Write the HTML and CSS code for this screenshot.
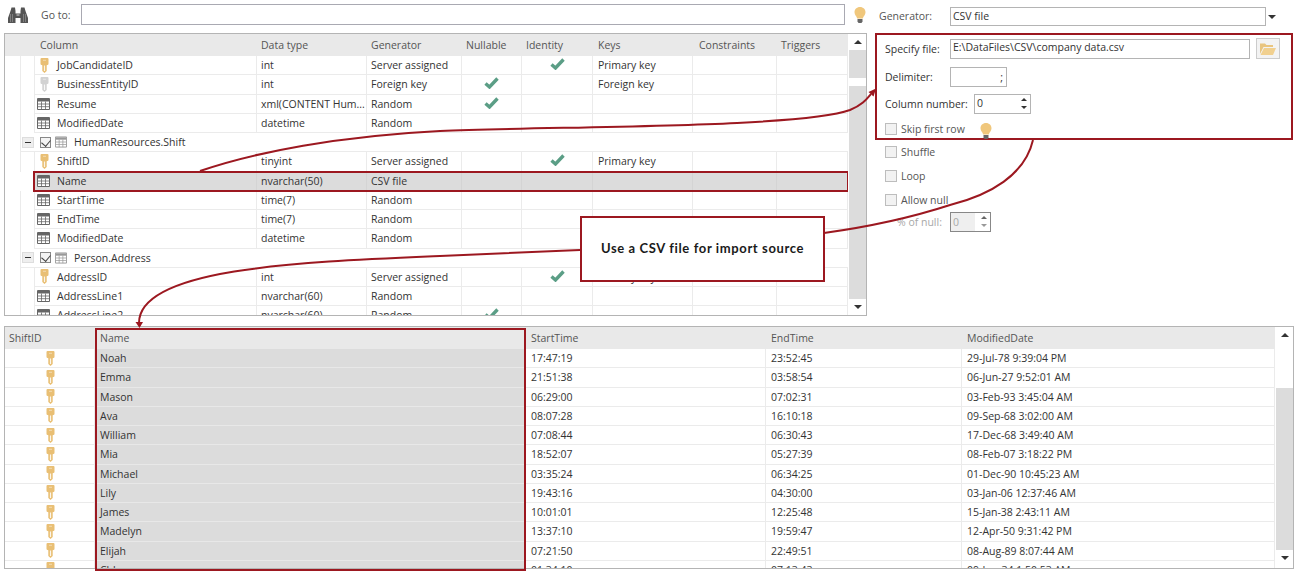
FILE: index.html
```html
<!DOCTYPE html>
<html lang="en">
<head>
    <meta charset="UTF-8">
    <title>Data Generator - CSV file</title>
    <link rel="stylesheet" href="styles.css">
</head>
<body>
    <svg class="defs" width="0" height="0">
        <symbol id="key" viewBox="0 0 9 15">
            <path d="M1.600 0h5.800q1.100 0 1.100 1.100v4.600q0 1.200-1.200 1.400l-.6.200v5.700L4.500 15l-2.200-2V7.300l-.6-.2Q.5 6.900.5 5.700V1.100Q.5 0 1.600 0z" fill="currentColor"/>
            <path d="M4.500 7.500v5.500" stroke="#fff" stroke-width="1.200" opacity=".85"/>
            <rect x="3" y="1.700" width="3" height="1.300" fill="#fff" opacity=".35"/>
        </symbol>
        <symbol id="tableicon" viewBox="0 0 13 12">
            <path d="M.5.5h12v11H.5z" fill="#fff" stroke="currentColor"/>
            <path d="M1 1h11v2.500H1z" fill="currentColor"/>
            <path d="M1 6h11M1 8.700h11M4.500 3.500v8M8.500 3.500v8" stroke="currentColor" stroke-width=".8" fill="none"/>
        </symbol>
        <symbol id="check" viewBox="0 0 15 12">
            <path d="M1.500 6.500l4 3.500L13.500 1.500" fill="none" stroke="#5b9e86" stroke-width="3.400"/>
        </symbol>
        <symbol id="bulb" viewBox="0 0 12 16">
            <path d="M6 0C2.700 0 .5 2.300.5 5.200c0 2.500 2 3.800 2.700 6.200h5.600c.7-2.400 2.700-3.700 2.700-6.200C11.500 2.300 9.300 0 6 0z" fill="#f0c77c"/>
            <path d="M3.500 12h5v2.500l-1 1.500h-3l-1-1.500z" fill="#666"/>
        </symbol>
    </svg>

    <div class="upper">
        <div class="left">
            <div class="goto">
                <svg class="binoculars" viewBox="0 0 20 16" width="20" height="16">
                    <path d="M2.500 4L3.500.5h3.500L7.500 4v2.500h5V4l.5-3.500h3.500l1 3.500L20 11v5h-7.500v-5h-5v5H0v-5z" fill="#555"/>
                    <path d="M2.500 7v8M4.500 7v8M15.500 7v8M17.500 7v8" stroke="#8c8c8c" stroke-width=".8"/>
                    <path d="M8.500 8h3" stroke="#ddd" stroke-width="1"/>
                </svg>
                <span class="goto-label">Go to:</span>
                <div class="goto-input"></div>
                <svg class="bulb goto-bulb"><use href="#bulb"/></svg>
            </div>

            <div class="grid columns-grid">
                <div class="grid-body">
                    <div class="row head">
                        <div></div><div>Column</div><div>Data type</div><div>Generator</div><div>Nullable</div><div>Identity</div><div>Keys</div><div>Constraints</div><div>Triggers</div>
                    </div>
                    <div class="row">
                        <div class="gutter"></div>
                        <div class="name"><svg class="key"><use href="#key"/></svg>JobCandidateID</div><div>int</div><div>Server assigned</div><div></div><div class="mark"><svg class="check"><use href="#check"/></svg></div><div>Primary key</div><div></div><div></div>
                    </div>
                    <div class="row">
                        <div class="gutter"></div>
                        <div class="name"><svg class="key key-grey"><use href="#key"/></svg>BusinessEntityID</div><div>int</div><div>Foreign key</div><div class="mark"><svg class="check"><use href="#check"/></svg></div><div></div><div>Foreign key</div><div></div><div></div>
                    </div>
                    <div class="row">
                        <div class="gutter"></div>
                        <div class="name"><svg class="tbl"><use href="#tableicon"/></svg>Resume</div><div>xml(CONTENT Hum...</div><div>Random</div><div class="mark"><svg class="check"><use href="#check"/></svg></div><div></div><div></div><div></div><div></div>
                    </div>
                    <div class="row">
                        <div class="gutter"></div>
                        <div class="name"><svg class="tbl"><use href="#tableicon"/></svg>ModifiedDate</div><div>datetime</div><div>Random</div><div></div><div></div><div></div><div></div><div></div>
                    </div>
                    <div class="group">
                        <span class="minus"></span><span class="tick"></span><svg class="tbl tbl-light"><use href="#tableicon"/></svg>HumanResources.Shift
                    </div>
                    <div class="row">
                        <div class="gutter"></div>
                        <div class="name"><svg class="key"><use href="#key"/></svg>ShiftID</div><div>tinyint</div><div>Server assigned</div><div></div><div class="mark"><svg class="check"><use href="#check"/></svg></div><div>Primary key</div><div></div><div></div>
                    </div>
                    <div class="row selected">
                        <div class="gutter"></div>
                        <div class="name"><svg class="tbl"><use href="#tableicon"/></svg>Name</div><div>nvarchar(50)</div><div>CSV file</div><div></div><div></div><div></div><div></div><div></div>
                    </div>
                    <div class="row">
                        <div class="gutter"></div>
                        <div class="name"><svg class="tbl"><use href="#tableicon"/></svg>StartTime</div><div>time(7)</div><div>Random</div><div></div><div></div><div></div><div></div><div></div>
                    </div>
                    <div class="row">
                        <div class="gutter"></div>
                        <div class="name"><svg class="tbl"><use href="#tableicon"/></svg>EndTime</div><div>time(7)</div><div>Random</div><div></div><div></div><div></div><div></div><div></div>
                    </div>
                    <div class="row">
                        <div class="gutter"></div>
                        <div class="name"><svg class="tbl"><use href="#tableicon"/></svg>ModifiedDate</div><div>datetime</div><div>Random</div><div></div><div></div><div></div><div></div><div></div>
                    </div>
                    <div class="group">
                        <span class="minus"></span><span class="tick"></span><svg class="tbl tbl-light"><use href="#tableicon"/></svg>Person.Address
                    </div>
                    <div class="row">
                        <div class="gutter"></div>
                        <div class="name"><svg class="key"><use href="#key"/></svg>AddressID</div><div>int</div><div>Server assigned</div><div></div><div class="mark"><svg class="check"><use href="#check"/></svg></div><div>Primary key</div><div></div><div></div>
                    </div>
                    <div class="row">
                        <div class="gutter"></div>
                        <div class="name"><svg class="tbl"><use href="#tableicon"/></svg>AddressLine1</div><div>nvarchar(60)</div><div>Random</div><div></div><div></div><div></div><div></div><div></div>
                    </div>
                    <div class="row">
                        <div class="gutter"></div>
                        <div class="name"><svg class="tbl"><use href="#tableicon"/></svg>AddressLine2</div><div>nvarchar(60)</div><div>Random</div><div class="mark"><svg class="check"><use href="#check"/></svg></div><div></div><div></div><div></div><div></div>
                    </div>
                </div>
                <div class="scrollbar scroll-top">
                    <div class="arrow-up"></div>
                    <div class="track track-a"></div>
                    <div class="thumb-gap"></div>
                    <div class="track track-b"></div>
                    <div class="arrow-down"></div>
                </div>
            </div>
        </div>

        <div class="right">
            <div class="generator">
                <span class="generator-label">Generator:</span>
                <div class="combo">CSV file</div>
                <span class="combo-arrow"></span>
            </div>

            <div class="csv-panel">
                <div class="form-row first">
                    <label class="form-label">Specify file:</label>
                    <div class="field file-field">E:\DataFiles\CSV\company data.csv</div>
                    <div class="folder-btn">
                        <svg viewBox="0 0 16 13" width="16" height="13">
                            <path d="M0 12V1.500h5l1.500 1.500H13v2H3.500z" fill="#e9c57f"/>
                            <path d="M.5 13l3.500-7h12l-3 7z" fill="#f1d08f"/>
                        </svg>
                    </div>
                </div>
                <div class="form-row delimiter-row">
                    <label class="form-label">Delimiter:</label>
                    <div class="field delimiter">;</div>
                </div>
                <div class="form-row column-row">
                    <label class="form-label label-wide">Column number:</label>
                    <div class="field spinner">0<span class="spin"><i class="up"></i><i class="down"></i></span></div>
                </div>
                <div class="form-row skip-row">
                    <span class="box"></span><span class="box-label">Skip first row</span>
                    <svg class="bulb skip-bulb"><use href="#bulb"/></svg>
                </div>
            </div>

            <div class="options">
                <div class="option"><span class="box"></span><span class="box-label">Shuffle</span></div>
                <div class="option"><span class="box"></span><span class="box-label">Loop</span></div>
                <div class="option"><span class="box"></span><span class="box-label">Allow null</span></div>
                <div class="null-row">
                    <span class="null-label">% of null:</span>
                    <div class="field spinner null-spinner"><span class="null-value">0</span><span class="spin"><i class="up"></i><i class="down"></i></span></div>
                </div>
            </div>
        </div>
    </div>

    <div class="grid data-grid">
        <div class="grid-body">
            <div class="drow head"><div>ShiftID</div><div>Name</div><div>StartTime</div><div>EndTime</div><div>ModifiedDate</div></div>
            <div class="drow"><div class="keycell"><svg class="key"><use href="#key"/></svg></div><div class="picked">Noah</div><div>17:47:19</div><div>23:52:45</div><div>29-Jul-78 9:39:04 PM</div></div>
            <div class="drow"><div class="keycell"><svg class="key"><use href="#key"/></svg></div><div class="picked">Emma</div><div>21:51:38</div><div>03:58:54</div><div>06-Jun-27 9:52:01 AM</div></div>
            <div class="drow"><div class="keycell"><svg class="key"><use href="#key"/></svg></div><div class="picked">Mason</div><div>06:29:00</div><div>07:02:31</div><div>03-Feb-93 3:45:04 AM</div></div>
            <div class="drow"><div class="keycell"><svg class="key"><use href="#key"/></svg></div><div class="picked">Ava</div><div>08:07:28</div><div>16:10:18</div><div>09-Sep-68 3:02:00 AM</div></div>
            <div class="drow"><div class="keycell"><svg class="key"><use href="#key"/></svg></div><div class="picked">William</div><div>07:08:44</div><div>06:30:43</div><div>17-Dec-68 3:49:40 AM</div></div>
            <div class="drow"><div class="keycell"><svg class="key"><use href="#key"/></svg></div><div class="picked">Mia</div><div>18:52:07</div><div>05:27:39</div><div>08-Feb-07 3:18:22 PM</div></div>
            <div class="drow"><div class="keycell"><svg class="key"><use href="#key"/></svg></div><div class="picked">Michael</div><div>03:35:24</div><div>06:34:25</div><div>01-Dec-90 10:45:23 AM</div></div>
            <div class="drow"><div class="keycell"><svg class="key"><use href="#key"/></svg></div><div class="picked">Lily</div><div>19:43:16</div><div>04:30:00</div><div>03-Jan-06 12:37:46 AM</div></div>
            <div class="drow"><div class="keycell"><svg class="key"><use href="#key"/></svg></div><div class="picked">James</div><div>10:01:01</div><div>12:25:48</div><div>15-Jan-38 2:43:11 AM</div></div>
            <div class="drow"><div class="keycell"><svg class="key"><use href="#key"/></svg></div><div class="picked">Madelyn</div><div>13:37:10</div><div>19:59:47</div><div>12-Apr-50 9:31:42 PM</div></div>
            <div class="drow"><div class="keycell"><svg class="key"><use href="#key"/></svg></div><div class="picked">Elijah</div><div>07:21:50</div><div>22:49:51</div><div>08-Aug-89 8:07:44 AM</div></div>
            <div class="drow"><div class="keycell"><svg class="key"><use href="#key"/></svg></div><div class="picked">Chloe</div><div>01:34:10</div><div>07:13:43</div><div>09-Jun-34 1:50:53 AM</div></div>
        </div>
        <div class="scrollbar scroll-bottom">
            <div class="arrow-up"></div>
            <div class="track"></div>
            <div class="arrow-down"></div>
        </div>
    </div>

    <!-- annotations drawn over the app -->
    <svg class="arrows" width="1300" height="573" viewBox="0 0 1300 573">
        <g fill="none" stroke="#9c1820" stroke-width="2">
            <path d="M200 171C255 152 340 136 440 131C560 126 800 128 850 110C862 105 866 100 871 94"/>
            <path d="M1033 140C1025 175 990 195 950 205C910 218 860 228 824 233"/>
            <path d="M580 250L440 256C300 262 139 268 139 323"/>
        </g>
        <path d="M876 88.500L873.500 96.500L868.500 92z" fill="#9c1820"/>
        <path d="M139.500 328L135.500 322H143z" fill="#9c1820"/>
    </svg>
    <div class="name-highlight"></div>
    <div class="callout">Use a CSV file for import source</div>
</body>
</html>
```

FILE: styles.css
```css
* {
    box-sizing: border-box;
}

body {
    margin: 0;
    width: 1300px;
    height: 573px;
    overflow: hidden;
    position: relative;
    background: #fff;
    font-family: "Open Sans", "Noto Sans", sans-serif;
    font-size: 10.5px;
    color: #333;
}

.defs {
    position: absolute;
}

.upper {
    display: flex;
    height: 326px;
}

.left {
    width: 867px;
    padding-left: 4px;
}

.right {
    width: 418px;
    margin-left: 8px;
}

/* go to bar */
.goto {
    display: flex;
    align-items: center;
    height: 29px;
    margin-bottom: 4px;
}

.binoculars {
    margin-left: 4px;
    margin-top: 1px;
}

.goto-label {
    width: 40px;
    margin-left: 13px;
    color: #555;
}

.goto-input {
    width: 764px;
    height: 21px;
    border: 1px solid #a9a9b2;
}

.bulb {
    width: 12px;
    height: 16px;
}

.goto-bulb {
    margin-left: 9px;
    margin-top: 1px;
}

/* grids */
.grid {
    display: flex;
    border: 1px solid #b4b4b4;
    overflow: hidden;
}

.grid-body {
    flex: 1;
    overflow: hidden;
}

.columns-grid {
    width: 863px;
    height: 283px;
}

.data-grid {
    width: 1290px;
    height: 243px;
    margin-left: 4px;
}

.row {
    display: grid;
    grid-template-columns: 30px 222px 110px 95px 60px 71px 100px 84px 71px;
    height: 19.25px;
}

.row > div {
    display: flex;
    align-items: center;
    padding-left: 4px;
    white-space: nowrap;
    overflow: hidden;
    border-right: 1px solid #ebebeb;
    border-bottom: 1px solid #ebebeb;
}

.row > div:nth-child(7) {
    padding-left: 5px;
}

.row.head {
    height: 22px;
    background: #e9e9e9;
    color: #555;
}

.row.head > div,
.drow.head > div {
    border: 0;
}

.row.head > div:nth-child(2) {
    padding-left: 5px;
}

.row.head > div:nth-child(8) {
    padding-left: 6px;
}

.row > .gutter {
    margin-left: 15px;
    padding: 0;
    border-bottom: 0;
    border-right: 1px solid #ebebeb;
    border-left: 1px solid #ebebeb;
}

.row > .name {
    padding-left: 2px;
}

.row > .mark {
    justify-content: center;
    padding: 0;
}

.row.selected {
    position: relative;
    background: #dcdcdc;
    outline: 2px solid #9c1820;
    outline-offset: -1px;
    margin-left: 29px;
    grid-template-columns: 1px 222px 110px 95px 60px 71px 100px 84px 71px;
}

.row.selected > .gutter {
    margin-left: 0;
    border: 0;
}

.row.selected > div {
    border-color: #d4d4d4;
}

.group {
    display: flex;
    align-items: center;
    height: 19.25px;
    margin-left: 15px;
    padding-left: 1px;
    border-left: 1px solid #ebebeb;
    border-bottom: 1px solid #ebebeb;
}

.minus {
    position: relative;
    width: 12px;
    height: 11px;
    background: #eee;
    border: 1px solid #ddd;
}

.minus::before {
    content: "";
    position: absolute;
    left: 2px;
    top: 4px;
    width: 6px;
    height: 1px;
    background: #333;
}

.tick {
    position: relative;
    width: 11px;
    height: 11px;
    margin-left: 6px;
    background: #f4f4f4;
    border: 1px solid #888;
}

.tick::before {
    content: "";
    position: absolute;
    left: 2px;
    top: 0;
    width: 5px;
    height: 7px;
    border: solid #444;
    border-width: 0 1px 1px 0;
    transform: rotate(40deg);
}

.tbl {
    flex: none;
    width: 13px;
    height: 12px;
    margin-right: 7px;
    color: #666;
}

.tbl-light {
    width: 12px;
    margin-left: 4px;
    color: #999;
}

.key {
    flex: none;
    width: 9px;
    height: 15px;
    margin-left: 3px;
    margin-right: 8px;
    color: #e9bf74;
}

.key-grey {
    color: #d2d2d2;
}

.check {
    width: 15px;
    height: 12px;
    margin-top: -2px;
}

.drow {
    display: grid;
    grid-template-columns: 90px 431px 240px 196px 313px;
    height: 19.25px;
}

.drow > div {
    display: flex;
    align-items: center;
    padding-left: 5px;
    white-space: nowrap;
    border-right: 1px solid #ebebeb;
    border-bottom: 1px solid #ebebeb;
}

.drow.head {
    height: 22px;
    background: #e9e9e9;
    color: #555;
}

.drow.head > div:first-child {
    padding-left: 4px;
}

.drow > .keycell {
    justify-content: center;
    padding: 0 0 0 1px;
}

.keycell .key {
    margin: 0;
}

.drow > .picked {
    background: #dcdcdc;
    border-color: #e8e8e8;
}

/* scrollbars */
.scrollbar {
    display: flex;
    flex-direction: column;
    flex: none;
    width: 17px;
    margin-left: 1px;
}

.arrow-up,
.arrow-down {
    position: relative;
    flex: none;
    height: 16px;
}

.arrow-up::before,
.arrow-down::before {
    content: "";
    position: absolute;
    left: 5px;
    top: 6px;
    border: 4px solid transparent;
    border-top: 0;
    border-bottom: 4px solid #333;
}

.arrow-down::before {
    border-bottom: 0;
    border-top: 4px solid #333;
}

.track {
    flex: 1;
    background: #dcdcdc;
}

.track-a {
    flex: none;
    height: 28px;
}

.thumb-gap {
    height: 8px;
}

.scroll-bottom .arrow-up {
    height: 61px;
}

.scroll-bottom .arrow-down {
    height: 18px;
}

/* generator side */
.generator {
    display: flex;
    align-items: center;
    height: 33px;
}

.generator-label {
    width: 71px;
    margin-left: 4px;
    padding-bottom: 2px;
    color: #555;
}

.combo {
    display: flex;
    align-items: center;
    width: 316px;
    height: 19px;
    padding: 0 0 2px 2px;
    border: 1px solid #b4b4b4;
}

.combo-arrow {
    margin-left: 2px;
    border: 4px solid transparent;
    border-bottom: 0;
    border-top: 4px solid #333;
}

.csv-panel {
    height: 107px;
    padding: 3px 8px 0;
    border: 2px solid #9c1820;
}

.form-row {
    display: flex;
    align-items: center;
}

.form-label {
    width: 65px;
    flex: none;
}

.label-wide {
    width: 89px;
}

.field {
    display: flex;
    align-items: center;
    height: 20px;
    padding-left: 2px;
    border: 1px solid #b4b4b4;
}

.file-field {
    width: 300px;
    padding-bottom: 3px;
}

.folder-btn {
    display: flex;
    align-items: center;
    justify-content: center;
    width: 24px;
    height: 21px;
    margin-left: 6px;
    background: #f3f3f3;
    border: 1px solid #ccc;
}

.delimiter-row {
    margin-top: 8px;
}

.delimiter {
    justify-content: flex-end;
    width: 57px;
    padding-right: 3px;
}

.column-row {
    margin-top: 7px;
}

.spinner {
    position: relative;
    width: 57px;
    padding-bottom: 3px;
}

.spin {
    position: absolute;
    right: 3px;
    top: 3px;
    display: flex;
    flex-direction: column;
    gap: 5px;
}

.spin i {
    display: block;
    border: 3px solid transparent;
    border-top: 0;
    border-bottom: 3px solid #333;
}

.spin i.down {
    border-bottom: 0;
    border-top: 3px solid #333;
}

.skip-row {
    margin-top: 9px;
    height: 12px;
}

.box {
    flex: none;
    width: 12px;
    height: 12px;
    background: #f2f2f2;
    border: 1px solid #bdbdbd;
}

.box-label {
    margin-left: 4px;
    color: #555;
}

.skip-bulb {
    margin-left: 15px;
    margin-top: 3px;
}

.options {
    padding: 6px 0 0 10px;
}

.option {
    display: flex;
    align-items: center;
    height: 12px;
    margin-bottom: 12px;
}

.null-row {
    display: flex;
    align-items: center;
    margin-top: -6px;
    padding-left: 12px;
    color: #a8a8a8;
}

.null-label {
    width: 53px;
}

.null-spinner {
    width: 41px;
    padding: 0;
    border-color: #888;
}

.null-value {
    display: flex;
    align-items: center;
    width: 24px;
    height: 18px;
    padding-left: 2px;
    background: #efefef;
}

.null-spinner .spin i.up {
    border-bottom-color: #666;
}

.null-spinner .spin i.down {
    border-top-color: #999;
}

/* annotations */
.arrows {
    position: absolute;
    left: 0;
    top: 0;
    z-index: 2;
}

.name-highlight {
    position: absolute;
    left: 95px;
    top: 328px;
    width: 431px;
    height: 243px;
    border: 2px solid #9c1820;
    z-index: 2;
}

.callout {
    position: absolute;
    left: 580px;
    top: 216px;
    width: 245px;
    height: 66px;
    display: flex;
    align-items: center;
    justify-content: center;
    padding-bottom: 2px;
    background: #fff;
    border: 2px solid #9c1820;
    font-family: "Lato", sans-serif;
    font-weight: 700;
    font-size: 13px;
    letter-spacing: .62px;
    color: #1a1a1a;
    z-index: 3;
}
```
